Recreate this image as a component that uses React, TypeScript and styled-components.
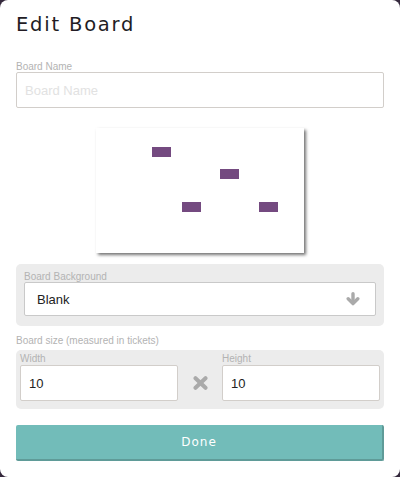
import styled, { createGlobalStyle } from 'styled-components'

const GlobalStyle = createGlobalStyle`
  html, body {
    margin: 0;
    padding: 0;
    background: #35293d;
  }
  * {
    box-sizing: border-box;
  }
`

const Modal = styled.div`
  width: 400px;
  height: 477px;
  background: #fff;
  border-radius: 8px;
  padding: 0 16px;
  font-family: 'Liberation Sans', Arial, sans-serif;
  color: #222;
  overflow: hidden;
`

const Title = styled.h1`
  margin: 0;
  padding-top: 13px;
  font-size: 19.5px;
  line-height: 23px;
  font-weight: 400;
  letter-spacing: 1.8px;
  color: #221c24;
  font-family: 'DejaVu Sans', 'Liberation Sans', sans-serif;
`

const Label = styled.div<{ $top?: number }>`
  font-size: 10px;
  line-height: 11px;
  color: #b3b3b3;
  margin-top: ${(p) => p.$top ?? 0}px;
`

const Input = styled.input`
  display: block;
  width: 100%;
  height: 36px;
  border: 1px solid #d2ceca;
  border-radius: 2px;
  padding: 0 8px;
  font-family: 'Liberation Sans', Arial, sans-serif;
  font-size: 13px;
  color: #222;
  background: #fff;
  outline: none;
  &::placeholder {
    color: #e2e2e2;
  }
`

const Preview = styled.div`
  position: relative;
  width: 208px;
  height: 125px;
  margin: 20px auto 0;
  background: #fff;
  box-shadow: 2px 2px 3px rgba(0, 0, 0, 0.55);
`

const Ticket = styled.div`
  position: absolute;
  width: 19px;
  height: 10px;
  background: #744a80;
`

const Panel = styled.div<{ $top: number }>`
  background: #ececec;
  border-radius: 5px;
  margin-top: ${(p) => p.$top}px;
  padding: 7px 8px 10px;
`

const Select = styled.div`
  display: flex;
  align-items: center;
  justify-content: space-between;
  height: 34px;
  background: #fff;
  border: 1px solid #c9c9c9;
  border-radius: 2px;
  padding: 0 15px 0 12px;
  font-size: 13px;
  color: #222;
`

const SizePanel = styled.div`
  display: grid;
  grid-template-columns: 1fr 44px 1fr;
  align-items: end;
  background: #ececec;
  border-radius: 5px;
  margin-top: 4px;
  padding: 3px 4px 8px;
`

const SizeField = styled.div`
  display: flex;
  flex-direction: column;
  gap: 1px;
`

const Times = styled.div`
  display: flex;
  align-items: center;
  justify-content: center;
  height: 36px;
`

const DoneButton = styled.button`
  display: block;
  width: 100%;
  height: 36px;
  margin-top: 16px;
  border: none;
  border-right: 2px solid #5f9b98;
  border-bottom: 2px solid #5f9b98;
  border-radius: 2px;
  background: #72bcb9;
  color: #fff;
  font-family: 'DejaVu Sans', 'Liberation Sans', sans-serif;
  font-size: 12px;
  letter-spacing: 1px;
  cursor: pointer;
`

const tickets = [
  { x: 56, y: 19 },
  { x: 124, y: 41 },
  { x: 86, y: 74 },
  { x: 163, y: 74 },
]

export default function App() {
  return (
    <>
      <GlobalStyle />
      <Modal>
        <Title>Edit Board</Title>
        <Label $top={25}>Board Name</Label>
        <Input placeholder="Board Name" />
        <Preview>
          {tickets.map((t, i) => (
            <Ticket key={i} style={{ left: t.x, top: t.y }} />
          ))}
        </Preview>
        <Panel $top={11}>
          <Label>Board Background</Label>
          <Select>
            <span>Blank</span>
            <svg width="14" height="14" viewBox="0 0 14 14">
              <g fill="none" stroke="#aaa" strokeWidth="3.4" strokeLinecap="round" strokeLinejoin="round">
                <path d="M7 1.8v9" />
                <path d="M2.2 6.8L7 11.6l4.8-4.8" />
              </g>
            </svg>
          </Select>
        </Panel>
        <Label $top={9}>Board size (measured in tickets)</Label>
        <SizePanel>
          <SizeField>
            <Label>Width</Label>
            <Input defaultValue="10" />
          </SizeField>
          <Times>
            <svg width="15" height="14" viewBox="0 0 15 14">
              <g fill="none" stroke="#aaa" strokeWidth="4" strokeLinecap="round">
                <path d="M2.5 2.2l10 9.6" />
                <path d="M12.5 2.2l-10 9.6" />
              </g>
            </svg>
          </Times>
          <SizeField>
            <Label>Height</Label>
            <Input defaultValue="10" />
          </SizeField>
        </SizePanel>
        <DoneButton>Done</DoneButton>
      </Modal>
    </>
  )
}
